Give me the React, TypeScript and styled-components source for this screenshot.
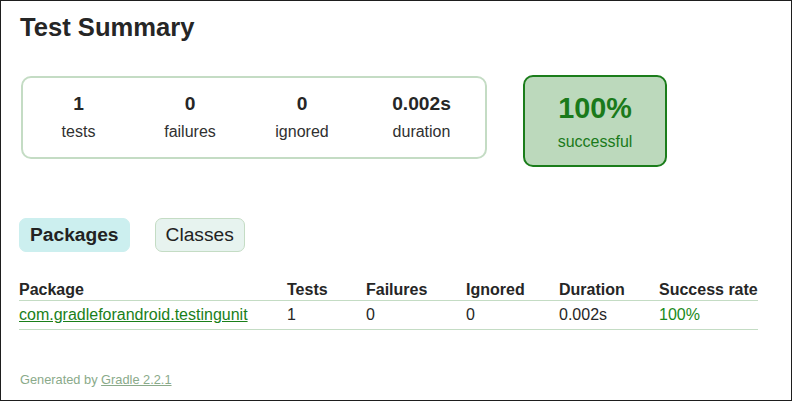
import React from "react";
import styled, { createGlobalStyle } from "styled-components";

const Global = createGlobalStyle`
  html, body { margin: 0; padding: 0; background: #ffffff; }
  body {
    font-family: "Liberation Sans", Arial, sans-serif;
    font-size: 16px;
    color: #262626;
  }
`;

const Frame = styled.div`
  box-sizing: border-box;
  width: 792px;
  height: 401px;
  border: 1px solid #1e1e1e;
  padding: 12px 0 0 18px;
  background: #ffffff;
  overflow: hidden;
`;

const Title = styled.h1`
  margin: 0 0 0 1px;
  font-size: 25.6px;
  line-height: 29px;
  font-weight: bold;
  color: #262626;
  white-space: nowrap;
`;

const SummaryRow = styled.div`
  display: flex;
  align-items: flex-start;
  margin-top: 33px;
  margin-left: 2px;
`;

const SummaryGroup = styled.div`
  display: flex;
  margin-top: 1px;
  border: 2px solid #c4dcc4;
  border-radius: 10px;
`;

const InfoBox = styled.div<{ $w: number }>`
  width: ${(p) => p.$w}px;
  padding: 15px 0 16px;
  text-align: center;
`;

const Counter = styled.div`
  font-size: 19.2px;
  line-height: 22px;
  font-weight: bold;
  margin-bottom: 8px;
  color: #262626;
`;

const Label = styled.p`
  margin: 0;
  font-size: 16px;
  line-height: 18px;
  color: #303030;
`;

const SuccessBox = styled.div`
  box-sizing: border-box;
  width: 144px;
  margin-left: 36px;
  padding: 15px 0 14px;
  text-align: center;
  border: 2px solid #1b7d1b;
  border-radius: 10px;
  background: #bcd9bc;
  color: #1a7a1a;
`;

const Percent = styled.div`
  font-size: 28.8px;
  line-height: 33px;
  font-weight: bold;
  margin-bottom: 8px;
`;

const SuccessLabel = styled.p`
  margin: 0;
  font-size: 16px;
  line-height: 18px;
  color: #1a7a1a;
`;

const Tabs = styled.ul`
  display: flex;
  list-style: none;
  margin: 51px 0 0;
  padding: 0;
`;

const Tab = styled.li<{ $selected?: boolean }>`
  margin-right: 25px;
  padding: 5px 10px;
  border-radius: 7px;
  border: 1px solid ${(p) => (p.$selected ? "#ccefef" : "#c4dcc4")};
  background: ${(p) => (p.$selected ? "#ccefef" : "#e7f3ef")};
  font-size: 19.2px;
  line-height: 22px;
  font-weight: ${(p) => (p.$selected ? "bold" : "normal")};
  color: #222222;
  white-space: nowrap;
`;

const Table = styled.div`
  margin-top: 29px;
  width: 739px;
`;

const Row = styled.div<{ $head?: boolean }>`
  display: grid;
  grid-template-columns: 268px 79px 100px 93px 100px 99px;
  border-bottom: 1px solid #c4dcc4;
  padding: ${(p) => (p.$head ? "0 0 1px" : "5px 0 5px")};
  font-size: 16px;
  line-height: 18px;
  font-weight: ${(p) => (p.$head ? "bold" : "normal")};
  white-space: nowrap;
`;

const Cell = styled.div<{ $success?: boolean }>`
  color: ${(p) => (p.$success ? "#1a8a1a" : "#262626")};
`;

const PkgLink = styled.a`
  color: #1a7f1a;
  text-decoration: underline;
`;

const Footer = styled.div`
  margin-top: 42px;
  margin-left: 1px;
  font-size: 12.8px;
  line-height: 15px;
  color: #8aaa8a;
  white-space: nowrap;
`;

const FooterLink = styled.a`
  color: #8aaa8a;
  text-decoration: underline;
`;

const stats = [
  { value: "1", label: "tests", w: 111 },
  { value: "0", label: "failures", w: 112 },
  { value: "0", label: "ignored", w: 112 },
  { value: "0.002s", label: "duration", w: 127 },
];

export default function App() {
  return (
    <>
      <Global />
      <Frame>
        <Title>Test Summary</Title>
        <SummaryRow>
          <SummaryGroup>
            {stats.map((s) => (
              <InfoBox key={s.label} $w={s.w}>
                <Counter>{s.value}</Counter>
                <Label>{s.label}</Label>
              </InfoBox>
            ))}
          </SummaryGroup>
          <SuccessBox>
            <Percent>100%</Percent>
            <SuccessLabel>successful</SuccessLabel>
          </SuccessBox>
        </SummaryRow>
        <Tabs>
          <Tab $selected>Packages</Tab>
          <Tab>Classes</Tab>
        </Tabs>
        <Table>
          <Row $head>
            <Cell>Package</Cell>
            <Cell>Tests</Cell>
            <Cell>Failures</Cell>
            <Cell>Ignored</Cell>
            <Cell>Duration</Cell>
            <Cell>Success rate</Cell>
          </Row>
          <Row>
            <Cell>
              <PkgLink href="#">com.gradleforandroid.testingunit</PkgLink>
            </Cell>
            <Cell>1</Cell>
            <Cell>0</Cell>
            <Cell>0</Cell>
            <Cell>0.002s</Cell>
            <Cell $success>100%</Cell>
          </Row>
        </Table>
        <Footer>
          Generated by <FooterLink href="#">Gradle 2.2.1</FooterLink>
        </Footer>
      </Frame>
    </>
  );
}
